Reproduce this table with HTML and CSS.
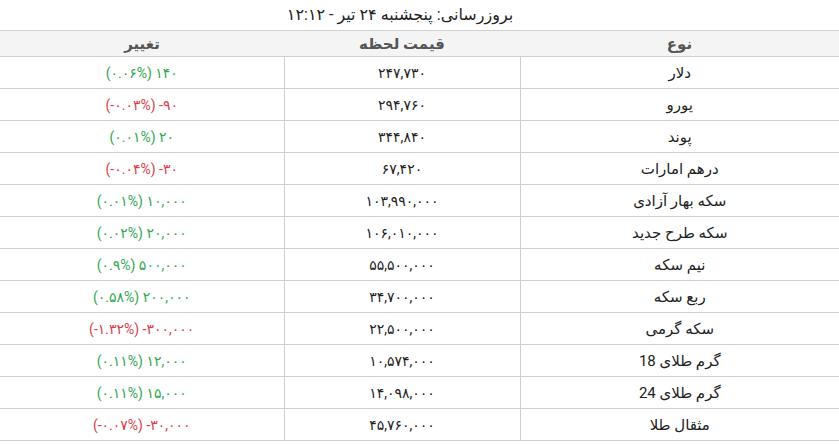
FILE: index.html
```html
<!DOCTYPE html>
<html lang="fa" dir="rtl">
<head>
<meta charset="utf-8">
<title>قیمت ارز و سکه</title>
<link rel="stylesheet" href="styles.css">
</head>
<body>
<div class="updated">بروزرسانی: پنجشنبه ۲۴ تیر - ۱۲:۱۲</div>
<table class="rates">
  <colgroup>
    <col class="c-name">
    <col class="c-price">
    <col class="c-change">
  </colgroup>
  <thead>
    <tr><th>نوع</th><th>قیمت لحظه</th><th>تغییر</th></tr>
  </thead>
  <tbody>
    <tr><td>دلار</td><td class="price">۲۴۷,۷۳۰</td><td class="chg up"><span>(۰.۰۶%) ۱۴۰</span></td></tr>
    <tr><td>یورو</td><td class="price">۲۹۴,۷۶۰</td><td class="chg down"><span>(-۰.۰۳%) -۹۰</span></td></tr>
    <tr><td>پوند</td><td class="price">۳۴۴,۸۴۰</td><td class="chg up"><span>(۰.۰۱%) ۲۰</span></td></tr>
    <tr><td>درهم امارات</td><td class="price">۶۷,۴۲۰</td><td class="chg down"><span>(-۰.۰۴%) -۳۰</span></td></tr>
    <tr><td>سکه بهار آزادی</td><td class="price">۱۰۳,۹۹۰,۰۰۰</td><td class="chg up"><span>(۰.۰۱%) ۱۰,۰۰۰</span></td></tr>
    <tr><td>سکه طرح جدید</td><td class="price">۱۰۶,۰۱۰,۰۰۰</td><td class="chg up"><span>(۰.۰۲%) ۲۰,۰۰۰</span></td></tr>
    <tr><td>نیم سکه</td><td class="price">۵۵,۵۰۰,۰۰۰</td><td class="chg up"><span>(۰.۹%) ۵۰۰,۰۰۰</span></td></tr>
    <tr><td>ربع سکه</td><td class="price">۳۴,۷۰۰,۰۰۰</td><td class="chg up"><span>(۰.۵۸%) ۲۰۰,۰۰۰</span></td></tr>
    <tr><td>سکه گرمی</td><td class="price">۲۲,۵۰۰,۰۰۰</td><td class="chg down"><span>(-۱.۳۲%) -۳۰۰,۰۰۰</span></td></tr>
    <tr><td>گرم طلای 18</td><td class="price">۱۰,۵۷۴,۰۰۰</td><td class="chg up"><span>(۰.۱۱%) ۱۲,۰۰۰</span></td></tr>
    <tr><td>گرم طلای 24</td><td class="price">۱۴,۰۹۸,۰۰۰</td><td class="chg up"><span>(۰.۱۱%) ۱۵,۰۰۰</span></td></tr>
    <tr><td>مثقال طلا</td><td class="price">۴۵,۷۶۰,۰۰۰</td><td class="chg down"><span>(-۰.۰۷%) -۳۰,۰۰۰</span></td></tr>
  </tbody>
</table>
<div class="next">دلار</div>
</body>
</html>
```
FILE: styles.css
```css
html, body {
  margin: 0;
  padding: 0;
  background: #fff;
}
body {
  font-family: "Roboto", "DejaVu Sans", sans-serif;
  font-size: 14px;
  color: #222;
}
.updated {
  height: 30px;
  line-height: 30px;
  text-align: center;
  padding-right: 39px;
  font-size: 16px;
  color: #222;
}
.rates {
  width: 100%;
  border-collapse: collapse;
  table-layout: fixed;
}
.c-name { width: 319px; }
.c-price { width: 236px; }
.c-change { width: 284px; }
.rates th {
  height: 25px;
  padding: 0;
  background: #f4f4f4;
  color: #555;
  font-weight: bold;
  font-size: 15px;
  text-align: center;
  border-top: 1px solid #cfcfcf;
  border-bottom: 1px solid #cfcfcf;
}
.rates td {
  height: 31px;
  padding: 0;
  text-align: center;
  border-bottom: 1px solid #cfcfcf;
  font-size: 15px;
  color: #222;
}
.rates td.price {
  border-left: 1px solid #cfcfcf;
  border-right: 1px solid #cfcfcf;
  font-size: 14px;
}
.chg span {
  direction: ltr;
  unicode-bidi: isolate;
  display: inline-block;
  font-size: 14px;
}
.rates td.up { color: #2fa84f; }
.rates td.down { color: #d9404a; }
.next {
  height: 4px;
  line-height: 20px;
  overflow: hidden;
  padding-right: 180px;
  text-align: right;
  font-size: 14px;
}
```
